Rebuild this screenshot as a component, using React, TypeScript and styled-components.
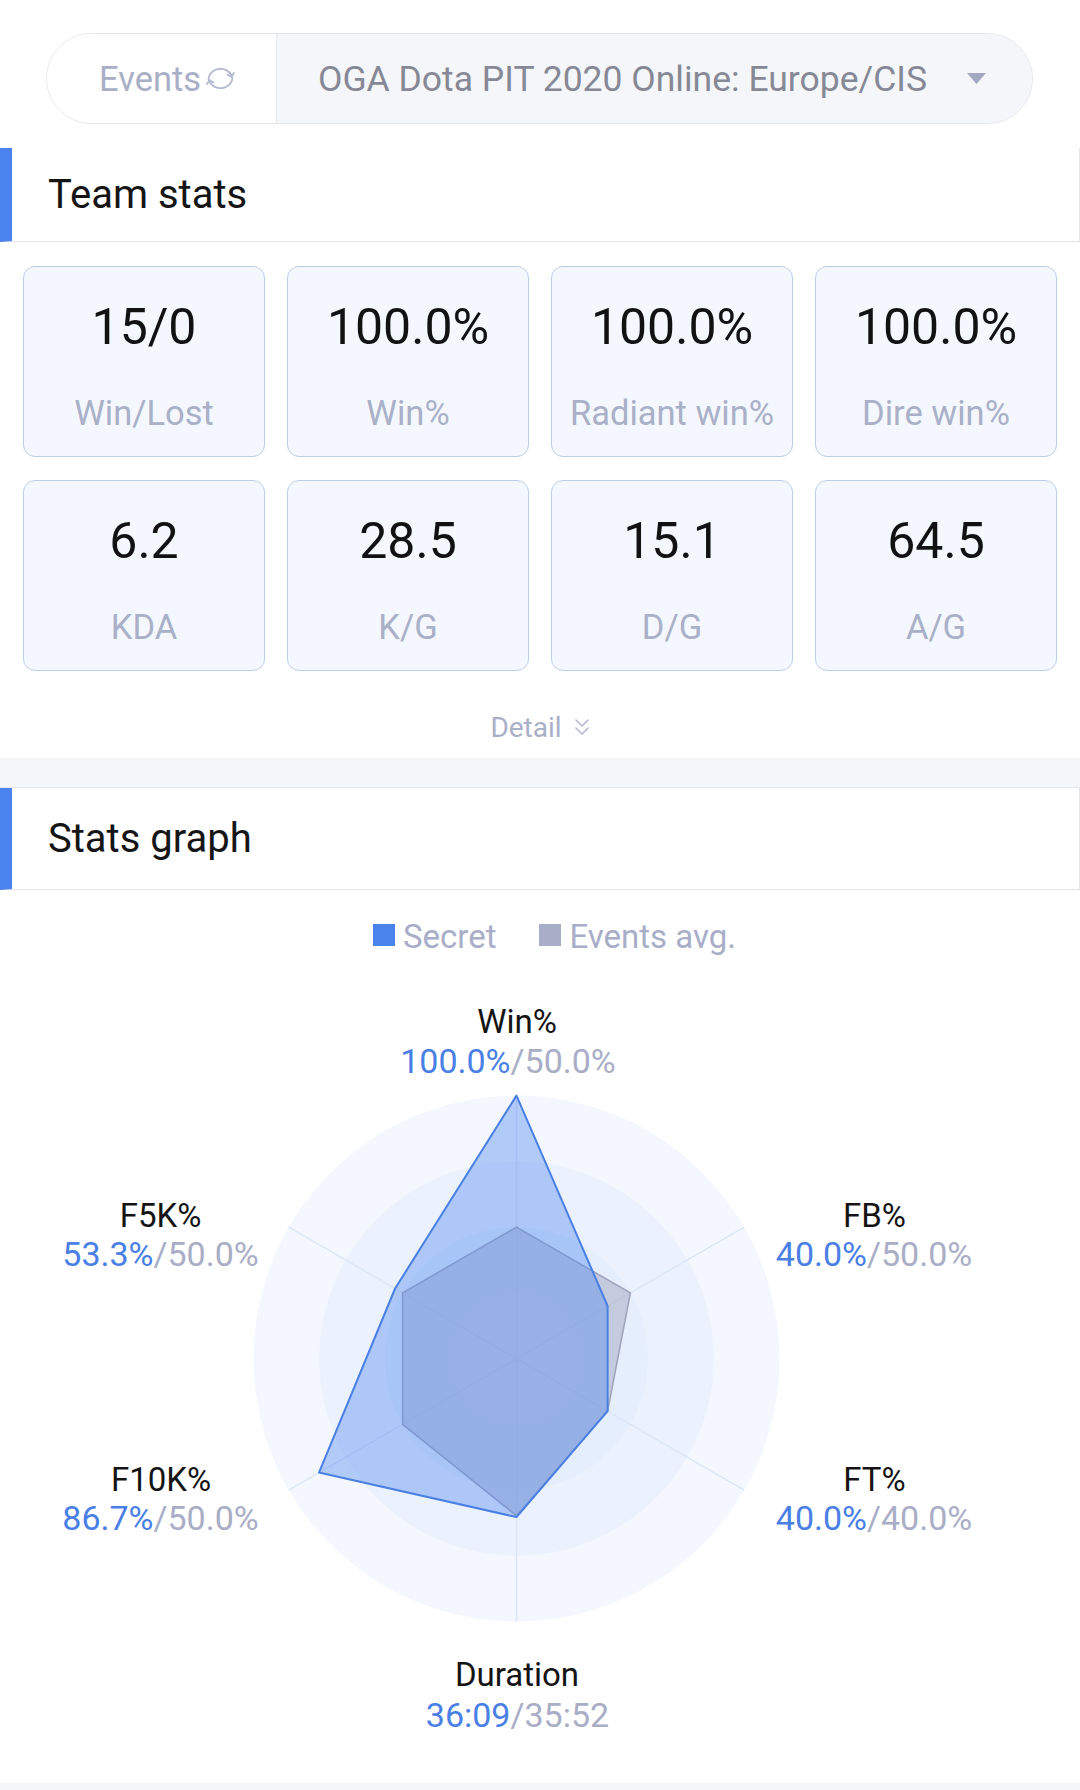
import React from "react";
import styled, { createGlobalStyle } from "styled-components";

const GlobalStyle = createGlobalStyle`
  body {
    margin: 0;
    background: #fff;
    font-family: Roboto, "Noto Sans", Arial, sans-serif;
  }
`;

const Page = styled.div`
  width: 1080px;
  min-height: 1790px;
  display: flex;
  flex-direction: column;
  background: #fff;
`;

const Selector = styled.div`
  margin: 33px 47px 0 46px;
  height: 91px;
  box-sizing: border-box;
  border: 1.5px solid #e4e6eb;
  border-radius: 46px;
  display: flex;
  overflow: hidden;
`;

const EventsTab = styled.div`
  width: 230px;
  box-sizing: border-box;
  padding-left: 52px;
  display: flex;
  align-items: center;
  gap: 4px;
  font-size: 34.5px;
  color: #a8afc7;
  border-right: 1.5px solid #e4e6eb;
  background: #fff;
`;

const EventPick = styled.div`
  flex: 1;
  background: #f5f6f9;
  display: flex;
  align-items: center;
  justify-content: space-between;
  padding: 0 46px 0 41px;
  font-size: 35.5px;
  color: #868995;
`;

const SectionHead = styled.div<{ $h: number; $top?: number }>`
  margin-top: ${(p) => p.$top ?? 0}px;
  height: ${(p) => p.$h}px;
  box-sizing: border-box;
  display: flex;
  align-items: center;
  padding-left: 36px;
  border-left: 12px solid #4a82ee;
  border-bottom: 1.5px solid #e3e5ea;
  border-right: 1.5px solid #e3e5ea;
  font-size: 40px;
  color: #151515;
`;

const CardGrid = styled.div`
  display: grid;
  grid-template-columns: repeat(4, 1fr);
  gap: 23px 22px;
  padding: 24px 23px 0;
`;

const Card = styled.div`
  height: 191px;
  box-sizing: border-box;
  padding-top: 30px;
  display: flex;
  flex-direction: column;
  align-items: center;
  background: #f4f8fe;
  border: 1.5px solid #bccde9;
  border-radius: 12px;
`;

const CardValue = styled.div`
  font-size: 50px;
  line-height: 60px;
  color: #121212;
`;

const CardLabel = styled.div`
  margin-top: 36px;
  font-size: 34.5px;
  line-height: 41px;
  color: #a9b0c8;
  white-space: nowrap;
`;

const DetailRow = styled.div`
  height: 87px;
  box-sizing: border-box;
  padding-top: 25px;
  display: flex;
  align-items: center;
  justify-content: center;
  gap: 12px;
  font-size: 28px;
  color: #a9b0c8;
`;

const Band = styled.div<{ $h: number }>`
  height: ${(p) => p.$h}px;
  background: #f5f6f8;
  border-bottom: 1.5px solid #e3e5ea;
`;

const FootBand = styled.div`
  flex: 1;
  background: #f5f6f8;
`;

const Legend = styled.div`
  height: 66px;
  box-sizing: border-box;
  padding: 28px 0 0 29px;
  display: flex;
  justify-content: center;
  gap: 43px;
  font-size: 33px;
  line-height: 40px;
  color: #a9aec8;
`;

const LegendItem = styled.div`
  display: flex;
  align-items: center;
  gap: 8px;
`;

const Swatch = styled.span<{ $c: string }>`
  width: 22px;
  height: 22px;
  margin-top: -4px;
  background: ${(p) => p.$c};
`;

const ChartSvg = styled.svg`
  display: block;
  font-family: Roboto, "Noto Sans", Arial, sans-serif;
`;

const stats = [
  { v: "15/0", l: "Win/Lost" },
  { v: "100.0%", l: "Win%" },
  { v: "100.0%", l: "Radiant win%" },
  { v: "100.0%", l: "Dire win%" },
  { v: "6.2", l: "KDA" },
  { v: "28.5", l: "K/G" },
  { v: "15.1", l: "D/G" },
  { v: "64.5", l: "A/G" },
];

const BLUE = "#4a80e6";
const GREY = "#a9aec6";

const CX = 516.5;
const CY = 402.6;
const R = 263;
// Win, FB, FT, Duration, F10K, F5K
const angles = [90, 30, -30, -90, -150, 150];
const secret = [1, 0.4, 0.4, 2169 / 3600, 0.867, 0.533];
const avg = [0.5, 0.5, 0.4, 2152 / 3600, 0.5, 0.5];

const pt = (deg: number, f: number) => {
  const a = (deg * Math.PI) / 180;
  return [CX + R * f * Math.cos(a), CY - R * f * Math.sin(a)];
};
const poly = (vals: number[]) =>
  vals.map((f, i) => pt(angles[i], f).map((n) => n.toFixed(1)).join(",")).join(" ");

const labels = [
  { name: "Win%", lx: 517, ly: 77, vx: 508, vy: 117, a: "100.0%", b: "50.0%" },
  { name: "FB%", lx: 874.5, ly: 271, vx: 874, vy: 310, a: "40.0%", b: "50.0%" },
  { name: "FT%", lx: 874.5, ly: 534.5, vx: 874, vy: 574, a: "40.0%", b: "40.0%" },
  { name: "Duration", lx: 517, ly: 730, vx: 517.5, vy: 771, a: "36:09", b: "35:52" },
  { name: "F10K%", lx: 161, ly: 534.5, vx: 160.5, vy: 574, a: "86.7%", b: "50.0%" },
  { name: "F5K%", lx: 160.5, ly: 271, vx: 160.5, vy: 310, a: "53.3%", b: "50.0%" },
];

const rings = [
  { f: 1, c: "#f4f8fe" },
  { f: 0.75, c: "#ebf2fd" },
  { f: 0.5, c: "#e5eefc" },
  { f: 0.25, c: "#edf3fd" },
];

const Radar = () => (
  <ChartSvg width={1080} height={827} viewBox="0 0 1080 827">
    {rings.map((r) => (
      <circle key={r.f} cx={CX} cy={CY} r={R * r.f} fill={r.c} />
    ))}
    {angles.map((a) => {
      const [x, y] = pt(a, 1);
      return <line key={a} x1={CX} y1={CY} x2={x} y2={y} stroke="#dce6f7" strokeWidth={1.5} />;
    })}
    <polygon points={poly(avg)} fill="rgba(150,155,180,0.42)" stroke="#9ea3bb" strokeWidth={1.5} />
    <polygon points={poly(secret)} fill="rgba(78,134,240,0.4)" stroke="#4a7fe3" strokeWidth={2} strokeLinejoin="round" />
    {labels.map((l) => (
      <g key={l.name} fontSize={34} textAnchor="middle">
        <text x={l.lx} y={l.ly} fill="#141414" fontSize={33}>
          {l.name}
        </text>
        <text x={l.vx} y={l.vy}>
          <tspan fill={BLUE}>{l.a}</tspan>
          <tspan fill={GREY}>/{l.b}</tspan>
        </text>
      </g>
    ))}
  </ChartSvg>
);

const RefreshIcon = () => (
  <svg width="31" height="27" viewBox="0 0 31 27" fill="none" stroke="#b3b9d0" strokeWidth="1.8" strokeLinecap="round" strokeLinejoin="round">
    <path d="M3.5 14 A12 11 0 0 1 26.5 10.5" />
    <path d="M22.5 9.5 L26.5 12 L29 8" />
    <path d="M27.5 13 A12 11 0 0 1 4.5 16.5" />
    <path d="M8.5 17.5 L4.5 15 L2 19" />
  </svg>
);

const Caret = () => (
  <svg width="19" height="11" viewBox="0 0 19 11">
    <path d="M0 0 H19 L9.5 11 Z" fill="#a2a7c2" />
  </svg>
);

const ChevronsDown = () => (
  <svg width="16" height="19" viewBox="0 0 16 19" fill="none" stroke="#b4b9d0" strokeWidth="1.6" strokeLinecap="round" strokeLinejoin="round">
    <path d="M2 2 L8 8 L14 2" />
    <path d="M2 10 L8 16 L14 10" />
  </svg>
);

export default function App() {
  return (
    <Page>
      <GlobalStyle />
      <Selector>
        <EventsTab>
          Events
          <RefreshIcon />
        </EventsTab>
        <EventPick>
          OGA Dota PIT 2020 Online: Europe/CIS
          <Caret />
        </EventPick>
      </Selector>

      <SectionHead $h={94} $top={24}>Team stats</SectionHead>
      <CardGrid>
        {stats.map((s, i) => (
          <Card key={i}>
            <CardValue>{s.v}</CardValue>
            <CardLabel>{s.l}</CardLabel>
          </Card>
        ))}
      </CardGrid>
      <DetailRow>
        Detail
        <ChevronsDown />
      </DetailRow>

      <Band $h={29} />
      <SectionHead $h={102}>Stats graph</SectionHead>
      <Legend>
        <LegendItem>
          <Swatch $c="#4a84ec" />
          Secret
        </LegendItem>
        <LegendItem>
          <Swatch $c="#a8adc8" />
          Events avg.
        </LegendItem>
      </Legend>
      <Radar />
      <FootBand />
    </Page>
  );
}
